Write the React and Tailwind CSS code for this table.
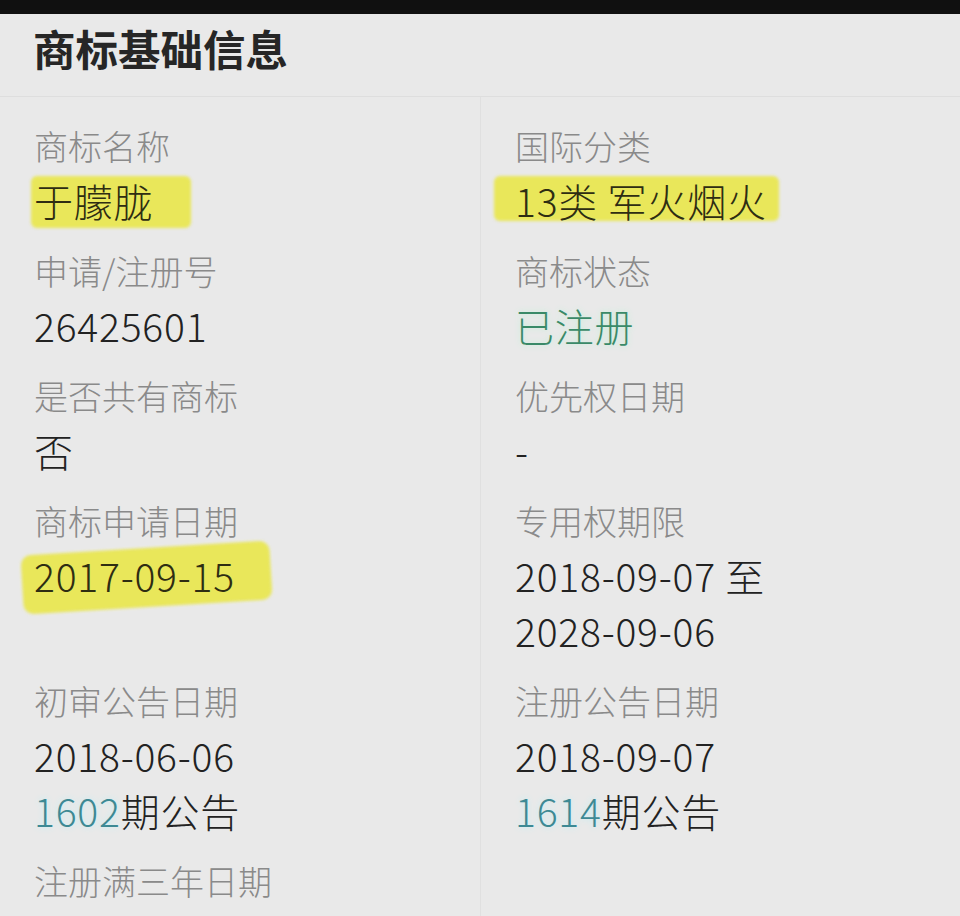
import React from "react";

const font = { fontFamily: '"Noto Sans CJK SC", "Noto Sans", sans-serif' };

function Label({ children }) {
  return <div className="text-[34px] leading-[54px] font-light text-[#8a8a8a] whitespace-nowrap">{children}</div>;
}

function Value({ children, className = "" }) {
  return <div className={"text-[39px] leading-[55px] font-light tracking-[0.8px] text-[#222222] whitespace-nowrap " + className}>{children}</div>;
}

function Cell({ label, children, right, first }) {
  return (
    <div className={"pb-[16px] pl-[34px] " + (first ? "pt-[22px] " : "") + (right ? "border-l border-[#e0e0e0]" : "")}>
      <Label>{label}</Label>
      {children}
    </div>
  );
}

function Mark({ className, children }) {
  return (
    <span className="relative inline-block">
      <span className={"absolute bg-[#e9e75a] blur-[1.5px] " + className} />
      <span className="relative text-[#2e2d12]">{children}</span>
    </span>
  );
}

function Issue({ num }) {
  return (
    <Value>
      <span className="text-[#3d8994] [text-shadow:0_0_6px_#bfeef4]">{num}</span>期公告
    </Value>
  );
}

export default function App() {
  return (
    <div className="w-[960px] h-[916px] overflow-hidden bg-[#e9e9e9]" style={font}>
      <div className="h-[14px] bg-[#101010]" />
      <div className="pt-[12px] pl-[33px] h-[83px] border-b border-[#dedede]">
        <div className="text-[42.5px] leading-[44px] font-bold text-[#262626]">商标基础信息</div>
      </div>
      <div className="grid grid-cols-2">
        <Cell label="商标名称" first>
          <Value>
            <Mark className="left-[-3px] right-[-38px] top-[3px] bottom-[0px] rounded-[6px]">于朦胧</Mark>
          </Value>
        </Cell>
        <Cell label="国际分类" right first>
          <Value>
            <Mark className="left-[-21px] right-[-12px] top-[3px] bottom-[7px] rounded-[6px]">13类 军火烟火</Mark>
          </Value>
        </Cell>

        <Cell label="申请/注册号">
          <Value>26425601</Value>
        </Cell>
        <Cell label="商标状态" right>
          <Value className="!text-[#3a8a68] [text-shadow:0_0_6px_#bdf0d6]">已注册</Value>
        </Cell>

        <Cell label="是否共有商标">
          <Value>否</Value>
        </Cell>
        <Cell label="优先权日期" right>
          <Value>-</Value>
        </Cell>

        <Cell label="商标申请日期">
          <Value>
            <Mark className="left-[-12px] right-[-36px] top-[0px] bottom-[-4px] rounded-[10px] -rotate-[3.5deg]">2017-09-15</Mark>
          </Value>
        </Cell>
        <Cell label="专用权期限" right>
          <Value>2018-09-07 至</Value>
          <Value>2028-09-06</Value>
        </Cell>

        <Cell label="初审公告日期">
          <Value>2018-06-06</Value>
          <Issue num="1602" />
        </Cell>
        <Cell label="注册公告日期" right>
          <Value>2018-09-07</Value>
          <Issue num="1614" />
        </Cell>

        <Cell label="注册满三年日期">
          <Value>&nbsp;</Value>
        </Cell>
        <Cell label="" right>
          <Value>&nbsp;</Value>
        </Cell>
      </div>
    </div>
  );
}
